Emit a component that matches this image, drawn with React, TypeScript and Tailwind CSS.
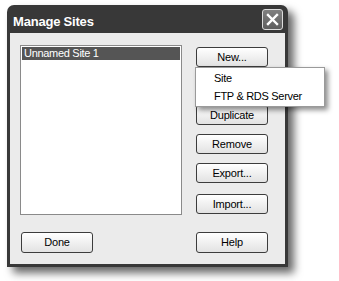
const font = { fontFamily: '"Liberation Sans", Arial, sans-serif' };

function Btn({ label, className = "" }: { label: string; className?: string }) {
  return (
    <button
      className={`flex h-[20px] w-[72px] items-center justify-center rounded-[3px] border border-[#3c3c3c] bg-gradient-to-b from-white to-[#e2e2e2] text-[11px] leading-none tracking-[-0.2px] text-black ${className}`}
    >
      {label}
    </button>
  );
}

export default function App() {
  return (
    <div className="relative h-[281px] w-[339px] overflow-hidden bg-white pl-[7px] pt-[5px]" style={font}>
      <div className="flex h-[262px] w-[281px] flex-col rounded-t-[7px] bg-[#383838] px-[3px] pb-[3px] shadow-[6px_6px_9px_rgba(0,0,0,0.6)]">
        <div className="flex h-[28px] items-center justify-between pl-[3px] pr-[2px]">
          <span className="pt-[5px] text-[13px] font-bold tracking-[-0.2px] text-white">Manage Sites</span>
          <div className="flex h-[21px] w-[21px] items-center justify-center rounded-[3px] border border-[#dcdcdc] bg-gradient-to-b from-[#808080] to-[#5e5e5e]">
            <svg width="13" height="13" viewBox="0 0 13 13">
              <path d="M2 2 L11 11 M11 2 L2 11" stroke="white" strokeWidth="2.4" strokeLinecap="square" />
            </svg>
          </div>
        </div>
        <div className="flex flex-1 flex-col bg-[#ebebeb] pl-[10px] pt-[12px]">
          <div className="flex">
            <div className="h-[170px] w-[162px] border border-[#8a8a8a] bg-white p-px">
              <div className="flex h-[13px] items-center bg-[#555555] pl-[2px] text-[11px] leading-none tracking-[-0.3px] text-white">
                Unnamed Site 1
              </div>
            </div>
            <div className="ml-[14px] flex flex-col gap-[9px] pt-[2px]">
              <Btn label="New..." />
              <Btn label="" />
              <Btn label="Duplicate" />
              <Btn label="Remove" />
              <Btn label="Export..." />
              <Btn label="Import..." className="mt-[2px]" />
            </div>
          </div>
          <div className="mt-[17px] flex">
            <Btn label="Done" className="ml-px h-[21px]" />
            <Btn label="Help" className="ml-[103px] h-[21px]" />
          </div>
        </div>
      </div>
      <div className="absolute left-[195px] top-[67px] flex h-[40px] w-[130px] flex-col justify-center border border-[#9a9a9a] bg-white text-[11px] tracking-[-0.3px] text-black shadow-[3px_3px_5px_rgba(0,0,0,0.45)]">
        <div className="flex h-[18px] items-center pl-[18px]">Site</div>
        <div className="flex h-[18px] items-center pl-[18px]">FTP &amp; RDS Server</div>
      </div>
    </div>
  );
}
